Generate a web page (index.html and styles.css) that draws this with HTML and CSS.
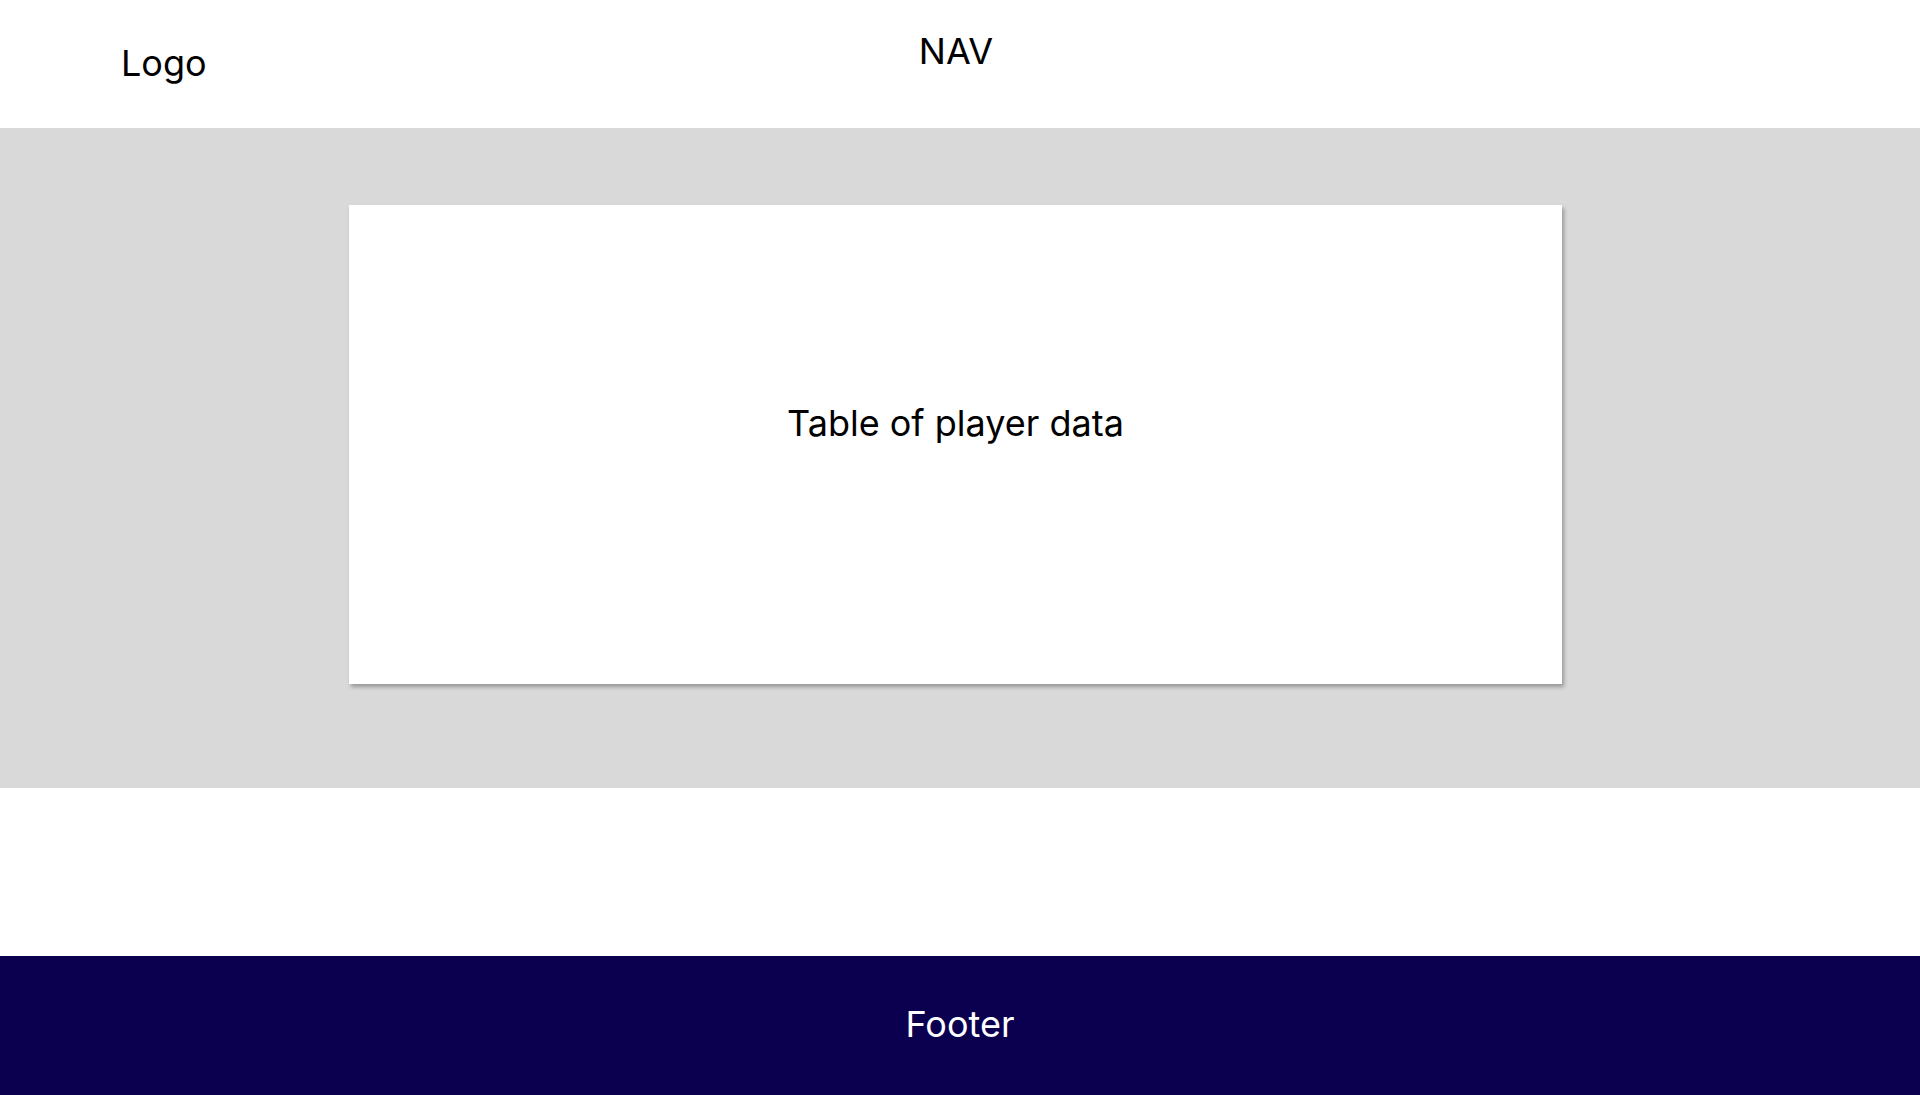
FILE: index.html
```html
<!DOCTYPE html>
<html lang="en">
<head>
<meta charset="utf-8">
<title>Player data</title>
<link rel="stylesheet" href="styles.css">
</head>
<body>
<header class="site-header">
  <div class="logo">Logo</div>
  <nav class="nav">NAV</nav>
  <div class="spacer"></div>
</header>
<main class="main">
  <section class="card">
    <p class="card-text">Table of player data</p>
  </section>
</main>
<div class="gap"></div>
<footer class="site-footer">Footer</footer>
</body>
</html>
```

FILE: styles.css
```css
* { box-sizing: border-box; }
html, body { margin: 0; padding: 0; }
body {
  font-family: Inter, "Noto Sans", sans-serif;
  color: #000;
  background: #fff;
  width: 1920px;
  height: 1095px;
  overflow: hidden;
}
.site-header {
  height: 128px;
  display: grid;
  grid-template-columns: 1fr auto 1fr;
  align-items: start;
  padding-right: 8px;
  background: #fff;
}
.logo {
  font-size: 36px;
  line-height: 44px;
  margin-top: 41px;
  padding-left: 121px;
}
.nav {
  font-size: 36px;
  line-height: 44px;
  margin-top: 29px;
}
.main {
  height: 660px;
  background: #d9d9d9;
  padding-top: 77px;
  padding-left: 349px;
}
.card {
  width: 1213px;
  height: 479px;
  background: #fff;
  box-shadow: 2px 3px 4px rgba(0, 0, 0, 0.3);
  padding-top: 196px;
}
.card-text {
  margin: 0;
  font-size: 36px;
  line-height: 44px;
  text-align: center;
}
.gap { height: 168px; }
.site-footer {
  height: 139px;
  background: #0b0050;
  color: #fff;
  font-size: 36px;
  line-height: 44px;
  text-align: center;
  padding-top: 46px;
}
```
